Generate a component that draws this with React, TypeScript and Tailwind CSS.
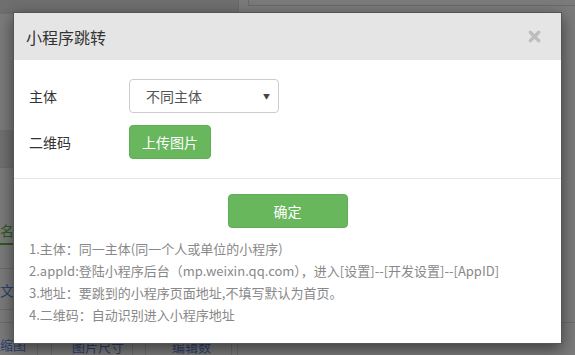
import { X } from "lucide-react";

const font = { fontFamily: '"Noto Sans CJK SC", "Noto Sans", sans-serif' };

function BackgroundPage() {
  // the page behind the modal, dimmed by the overlay
  return (
    <div className="absolute inset-0 bg-[#7b7b7b]">
      <div className="flex h-[14px]">
        <div className="w-[239px] bg-[#6f6f6f] border-r border-[#6a6a6a]" />
        <div className="flex-1 pl-[9px]">
          <div className="h-[6px] border-l border-b border-[#6a6a6a]" />
        </div>
      </div>
      <div className="absolute left-0 top-[130px] w-[40px] h-[38px] bg-[#707070] border-b border-[#6c6c6c]" />
      <div className="absolute left-0 top-[220px] w-[40px] text-[14px] text-[#2f5a1f] border-b-2 border-[#2f5a1f] pb-[2px]">
        名基
      </div>
      <div className="absolute left-0 top-[268px] w-[40px] h-[42px] border-y border-[#6c6c6c] text-[14px] text-[#2c3f6e] leading-[42px]">
        文本
      </div>
      <div className="absolute left-0 top-[322px] w-[575px] h-[33px] border-t border-[#6c6c6c] flex text-[13px] text-[#2c3f6e]">
        <div className="w-[38px] border-r border-[#6c6c6c] pt-[12px]">缩图</div>
        <div className="w-[14px] border-r border-[#6c6c6c]" />
        <div className="w-[81px] border-r border-[#6c6c6c] pt-[14px] pl-[20px]">图片尺寸</div>
        <div className="w-[13px] border-r border-[#6c6c6c]" />
        <div className="w-[86px] border-r border-[#6c6c6c] pt-[14px] pl-[26px]">编辑数</div>
        <div className="w-[6px] border-r border-[#6c6c6c]" />
      </div>
    </div>
  );
}

export default function App() {
  const tips = [
    "1.主体：同一主体(同一个人或单位的小程序)",
    "2.appId:登陆小程序后台（mp.weixin.qq.com），进入[设置]--[开发设置]--[AppID]",
    "3.地址：要跳到的小程序页面地址,不填写默认为首页。",
    "4.二维码：自动识别进入小程序地址",
  ];

  return (
    <div className="relative w-[575px] h-[355px] overflow-hidden" style={font}>
      <BackgroundPage />

      <div className="absolute left-[13px] top-[12px] w-[549px] bg-white border border-[#555] shadow-[0_5px_15px_rgba(0,0,0,0.5)]">
        <div className="h-[47px] bg-[#e5e5e5] flex items-center justify-between pl-[12px] pr-[18px]">
          <h3 className="text-[16px] text-[#333]">小程序跳转</h3>
          <X className="w-[17px] h-[17px] text-[#bdbdbd]" strokeWidth={4.5} />
        </div>

        <div className="px-[15px] pt-[19px] pb-[19px] border-b border-[#e5e5e5] text-[14px] text-[#333]">
          <div className="flex items-center h-[34px]">
            <span className="w-[100px]">主体</span>
            <div className="w-[150px] h-[34px] border border-[#ccc] rounded-[4px] flex items-center justify-between pl-[16px] pr-[8px]">
              <span className="text-[#555]">不同主体</span>
              <span className="text-[7px] text-[#444]">▼</span>
            </div>
          </div>
          <div className="flex items-center h-[34px] mt-[12px]">
            <span className="w-[100px]">二维码</span>
            <button className="w-[82px] h-[34px] rounded-[4px] bg-[#69b75d] border border-[#5eae53] text-white text-[14px]">
              上传图片
            </button>
          </div>
        </div>

        <div className="pt-[15px] pb-[17px] px-[15px]">
          <div className="flex justify-center">
            <button className="w-[120px] h-[34px] rounded-[4px] bg-[#69b75d] border border-[#5eae53] text-white text-[14px]">
              确定
            </button>
          </div>
          <div className="mt-[10px] text-[13px] text-[#888] leading-[22px]">
            {tips.map((t) => (
              <p key={t}>{t}</p>
            ))}
          </div>
        </div>
      </div>
    </div>
  );
}
